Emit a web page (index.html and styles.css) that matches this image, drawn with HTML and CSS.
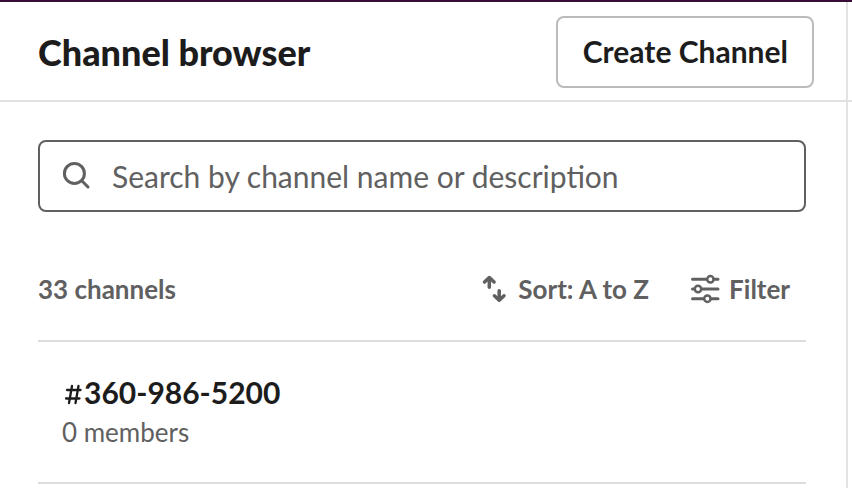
FILE: index.html
```html
<!DOCTYPE html>
<html lang="en">
<head>
<meta charset="utf-8">
<title>Channel browser</title>
<link rel="stylesheet" href="styles.css">
</head>
<body>
<div class="workspace">
  <main class="panel">
    <header class="panel-header">
      <h1 class="title">Channel browser</h1>
      <button class="create" type="button">Create Channel</button>
    </header>
    <div class="content">
      <label class="search">
        <svg class="search-icon" viewBox="0 0 30 30" aria-hidden="true"><circle cx="12.4" cy="12.4" r="10"/><path d="M19.800 19.800L26 26"/></svg>
        <input class="search-input" type="text" placeholder="Search by channel name or description" aria-label="Search channels">
      </label>
      <div class="toolbar">
        <span class="count">33 channels</span>
        <button class="tool" type="button">
          <svg class="sort-icon" viewBox="0 0 26 28" aria-hidden="true"><path d="M7.300 12.300V3M2.500 7L7.300 2.500L12.100 7M17.200 15.700V25M12.400 20.800L17.200 25.300L22 20.800"/></svg>
          Sort: A to Z
        </button>
        <button class="tool filter" type="button">
          <svg class="filter-icon" viewBox="0 0 30 30" aria-hidden="true"><path d="M2.500 5.300H16.500M24 5.300H28M2.500 15H4M11.500 15H28M2.500 24.700H13.500M21 24.700H28"/><g class="knobs"><circle cx="20.400" cy="5.300" r="3.200"/><circle cx="8" cy="15" r="3.200"/><circle cx="17.400" cy="24.700" r="3.200"/></g></svg>
          Filter
        </button>
      </div>
      <ul class="channels">
        <li class="channel">
          <h2 class="channel-name"><svg class="hash" viewBox="0 0 22 26" role="img" aria-label="#"><path d="M10 7L7 24M16.500 7L13.500 24M5 11H18.500M4 19.500H17.500"/></svg>360-986-5200</h2>
          <p class="members">0 members</p>
        </li>
      </ul>
    </div>
  </main>
  <aside class="side"><div class="side-header"></div></aside>
</div>
</body>
</html>
```
FILE: styles.css
```css
* { box-sizing: border-box; }

body {
  margin: 0;
  background: #fff;
  color: #1d1c1d;
  font-family: Lato, "Liberation Sans", sans-serif;
}

svg {
  flex: none;
  fill: none;
  stroke: currentColor;
  stroke-width: 3px;
  stroke-linecap: round;
  stroke-linejoin: round;
}

button {
  font: inherit;
  cursor: pointer;
}

.workspace {
  display: flex;
  min-height: 100vh;
  border-top: 2px solid #350d36;
}

.panel { flex: 1; }

.panel-header {
  display: flex;
  align-items: center;
  justify-content: space-between;
  height: 100px;
  padding: 2px 32px 0 38px;
  border-bottom: 2px solid #e2e2e2;
}

.title {
  margin: 0;
  font-family: "Lato Black", Lato, "Liberation Sans", sans-serif;
  font-size: 36px;
  font-weight: 900;
  line-height: 44px;
}

.create {
  height: 72px;
  padding: 0 24px 2px 25px;
  border: 2px solid #bbb;
  border-radius: 8px;
  background: #fff;
  color: inherit;
  font-size: 30px;
  font-weight: 700;
}

.content { padding: 38px 40px 0 38px; }

.search {
  display: flex;
  align-items: center;
  gap: 20px;
  height: 72px;
  padding: 0 22px;
  border: 2px solid #616061;
  border-radius: 8px;
  color: #616061;
}

.search-icon {
  width: 30px;
  height: 30px;
}

.search-input {
  flex: 1;
  min-width: 0;
  height: 64px;
  padding: 0;
  border: 0;
  outline: 0;
  background: transparent;
  color: #1d1c1d;
  font: 30px Lato, "Liberation Sans", sans-serif;
}

.search-input::placeholder {
  color: #616061;
  opacity: 1;
}

.toolbar {
  display: flex;
  align-items: center;
  gap: 41px;
  margin-top: 56px;
  padding-right: 16px;
  color: #616061;
  font-size: 26px;
  font-weight: 700;
  line-height: 42px;
}

.count { margin-right: auto; }

.tool {
  display: flex;
  align-items: center;
  gap: 10px;
  padding: 0;
  border: 0;
  background: none;
  color: inherit;
}

.filter { gap: 9px; }

.sort-icon {
  width: 26px;
  height: 28px;
  stroke-width: 3.5px;
}

.filter-icon {
  width: 30px;
  height: 30px;
}

.knobs { stroke-width: 2.5px; }

.channels {
  margin: 30px 0 0;
  padding: 0;
  border-top: 2px solid #ddd;
  list-style: none;
}

.channel {
  padding: 28px 24px 32px;
  border-bottom: 2px solid #ddd;
}

.channel-name {
  display: flex;
  align-items: center;
  margin: 0;
  font-size: 30px;
  font-weight: 700;
  line-height: 44px;
}

.hash {
  width: 22px;
  height: 26px;
  stroke-width: 2.3px;
}

.members {
  margin: 0;
  color: #616061;
  font-size: 26px;
  line-height: 36px;
}

.side {
  width: 6px;
  border-left: 2px solid #e2e2e2;
}

.side-header {
  height: 100px;
  border-bottom: 2px solid #e2e2e2;
}
```
